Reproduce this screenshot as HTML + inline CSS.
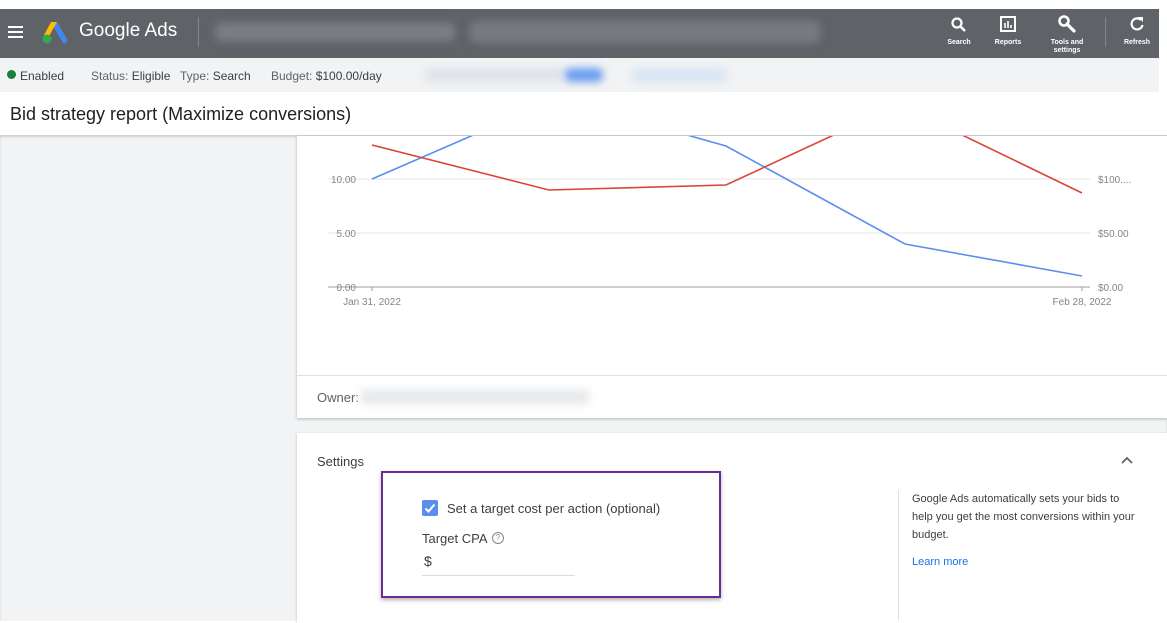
<!DOCTYPE html>
<html><head><meta charset="utf-8"><style>
*{margin:0;padding:0;box-sizing:border-box}
body{width:1167px;height:621px;overflow:hidden;background:#fff;font-family:"Liberation Sans",Arial,sans-serif;position:relative}
.abs{position:absolute}
.hdr{left:0;top:9px;width:1159px;height:49px;background:#5f6368}
.sub{left:0;top:58px;width:1159px;height:34px;background:#f1f3f4;font-size:12px;color:#3c4043}
.blur{filter:blur(4px);border-radius:6px}
.icl{color:#fff;font-size:7px;font-weight:bold;text-align:center;line-height:8px}
</style></head><body>
<div class="abs hdr">
  <div class="abs" style="left:8px;top:17px;width:15px;height:2px;background:#fff;box-shadow:0 5px 0 #fff,0 10px 0 #fff"></div>
  <svg class="abs" style="left:41px;top:10px" width="28" height="26" viewBox="0 0 28 26">
    <path d="M10 3 L16 3 L26 20 Q27 25 22 24 Z" fill="#4285f4"/>
    <path d="M10 3 L16 3 L7 19 L3 16 Z" fill="#fbbc04"/>
    <circle cx="6" cy="20" r="4.5" fill="#34a853"/>
  </svg>
  <div class="abs" style="left:79px;top:11px;font-size:19px;color:#fff">Google Ads</div>
  <div class="abs" style="left:198px;top:8px;width:1px;height:30px;background:#80868b"></div>
  <div class="abs blur" style="left:215px;top:14px;width:240px;height:18px;background:#7a7e83"></div>
  <div class="abs blur" style="left:470px;top:12px;width:350px;height:22px;background:#777b80"></div>
  <svg class="abs" style="left:950px;top:7px" width="18" height="18" viewBox="0 0 18 18"><circle cx="7" cy="7" r="4.5" stroke="#fff" stroke-width="2.2" fill="none"/><path d="M10.5 10.5 L15 15" stroke="#fff" stroke-width="2.5"/></svg>
  <div class="abs icl" style="left:940px;top:30px;width:38px">Search</div>
  <svg class="abs" style="left:999px;top:6px" width="18" height="18" viewBox="0 0 18 18"><rect x="2" y="2" width="14" height="14" fill="none" stroke="#fff" stroke-width="2"/><path d="M6 13V8M9 13V6M12 13V10" stroke="#fff" stroke-width="1.6"/></svg>
  <div class="abs icl" style="left:988px;top:30px;width:40px">Reports</div>
  <svg class="abs" style="left:1056px;top:5px" width="22" height="22" viewBox="0 0 22 22"><circle cx="8" cy="7" r="4.5" stroke="#fff" stroke-width="2.6" fill="none"/><path d="M11 10 L18 17" stroke="#fff" stroke-width="3.2" stroke-linecap="round"/></svg>
  <div class="abs icl" style="left:1044px;top:30px;width:46px">Tools and<br>settings</div>
  <div class="abs" style="left:1105px;top:8px;width:1px;height:30px;background:#80868b"></div>
  <svg class="abs" style="left:1128px;top:6px" width="18" height="18" viewBox="0 0 18 18"><path d="M13 5 A5.5 5.5 0 1 0 14.5 10" stroke="#fff" stroke-width="2.2" fill="none"/><path d="M10 2 L15 2 L15 7 Z" fill="#fff"/></svg>
  <div class="abs icl" style="left:1117px;top:30px;width:40px">Refresh</div>
</div>
<div class="abs sub">
  <div class="abs" style="left:7px;top:12px;width:9px;height:9px;border-radius:50%;background:#188038"></div>
  <div class="abs" style="left:20px;top:11px">Enabled</div>
  <div class="abs" style="left:91px;top:11px"><span style="color:#5f6368">Status:</span> Eligible</div>
  <div class="abs" style="left:180px;top:11px"><span style="color:#5f6368">Type:</span> Search</div>
  <div class="abs" style="left:271px;top:11px"><span style="color:#5f6368">Budget:</span> $100.00/day</div>
  <div class="abs blur" style="left:425px;top:10px;width:140px;height:14px;background:#dfe3e8"></div>
  <div class="abs blur" style="left:565px;top:10px;width:38px;height:14px;background:#6b9ef0"></div>
  <div class="abs blur" style="left:632px;top:10px;width:95px;height:14px;background:#d9e4f5"></div>
</div>
<div class="abs" style="left:10px;top:104px;font-size:18px;color:#202124">Bid strategy report (Maximize conversions)</div>
<div class="abs" style="left:0;top:135px;width:1167px;height:486px;background:#f1f3f4;box-shadow:inset 0 2px 2px rgba(0,0,0,.15)"></div>
<div class="abs" style="left:297px;top:136px;width:870px;height:282px;background:#fff;box-shadow:0 1px 3px rgba(0,0,0,.25)"></div>
<div class="abs" style="left:297px;top:375px;width:870px;height:1px;background:#e0e0e0"></div>
<div class="abs" style="left:317px;top:390px;font-size:13px;color:#5f6368">Owner:</div>
<div class="abs blur" style="left:360px;top:389px;width:230px;height:16px;background:#e8eaed"></div>
<svg class="abs" style="left:297px;top:136px" width="870" height="180" viewBox="297 136 870 180">
  <g stroke="#e6e6e6" stroke-width="1"><path d="M328 179H1090M328 233H1090"/></g>
  <path d="M328 287H1090M372 287v4M1082 287v4" stroke="#9e9e9e" stroke-width="1"/>
  <g font-size="10" fill="#80868b" font-family="Liberation Sans,sans-serif">
    <text x="356" y="183" text-anchor="end">10.00</text>
    <text x="356" y="237" text-anchor="end">5.00</text>
    <text x="356" y="291" text-anchor="end">0.00</text>
    <text x="1098" y="183">$100....</text>
    <text x="1098" y="237">$50.00</text>
    <text x="1098" y="291">$0.00</text>
    <text x="372" y="305" text-anchor="middle">Jan 31, 2022</text>
    <text x="1082" y="305" text-anchor="middle">Feb 28, 2022</text>
  </g>
  <polyline points="372,179 478,133 680,133 726,146 905,244 1082,276" fill="none" stroke="#5b8def" stroke-width="1.6"/>
  <polyline points="372,145 549,190 726,185 838,133 958,133 1082,193" fill="none" stroke="#db4437" stroke-width="1.6"/>
</svg>
<div class="abs" style="left:297px;top:433px;width:870px;height:190px;background:#fff;box-shadow:0 1px 3px rgba(0,0,0,.2)"></div>
<div class="abs" style="left:317px;top:454px;font-size:13px;color:#3c4043">Settings</div>
<svg class="abs" style="left:1120px;top:455px" width="14" height="10"><path d="M2 8 L7 3 L12 8" stroke="#5f6368" stroke-width="1.8" fill="none"/></svg>
<div class="abs" style="left:898px;top:490px;width:1px;height:131px;background:#e0e0e0"></div>
<div class="abs" style="left:912px;top:490px;width:230px;font-size:11px;line-height:18px;color:#3c4043">Google Ads automatically sets your bids to help you get the most conversions within your budget.</div>
<div class="abs" style="left:912px;top:556px;font-size:11px;color:#1a73e8">Learn more</div>
<div class="abs" style="left:381px;top:471px;width:340px;height:127px;border:2px solid #6a2c91;box-shadow:0 2px 4px rgba(0,0,0,.3)"></div>
<div class="abs" style="left:422px;top:500px;width:16px;height:16px;border-radius:2px;background:#5b8def"></div>
<svg class="abs" style="left:422px;top:500px" width="16" height="16"><path d="M3.5 8.5 L6.5 11.5 L12.5 4.5" stroke="#fff" stroke-width="2" fill="none"/></svg>
<div class="abs" style="left:447px;top:501px;font-size:13px;color:#3c4043">Set a target cost per action (optional)</div>
<div class="abs" style="left:422px;top:531px;font-size:13px;color:#3c4043">Target CPA</div>
<div class="abs" style="left:492px;top:532px;width:12px;height:12px;border:1px solid #80868b;border-radius:50%;font-size:8px;line-height:10px;text-align:center;color:#80868b">?</div>
<div class="abs" style="left:424px;top:553px;font-size:14px;color:#3c4043">$</div>
<div class="abs" style="left:422px;top:575px;width:153px;height:1px;background:#dadce0"></div>
</body></html>
